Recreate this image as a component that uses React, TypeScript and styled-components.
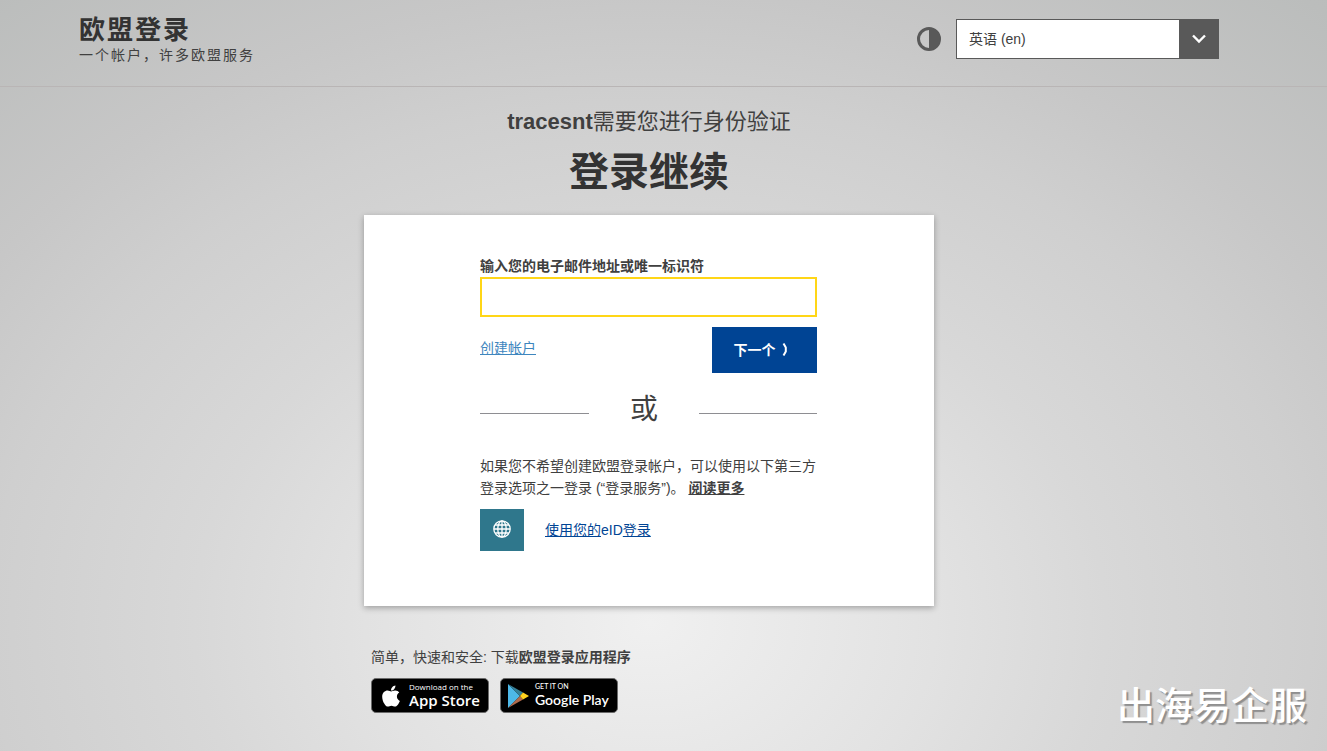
import React from "react";
import styled, { createGlobalStyle } from "styled-components";
import { FaApple } from "react-icons/fa";

const GlobalStyle = createGlobalStyle`
  *, *::before, *::after { box-sizing: border-box; }
  body {
    margin: 0;
    color: #404040;
    font-family: "Liberation Sans", "Noto Sans CJK SC", sans-serif;
    font-size: 14px;
    line-height: 22px;
  }
  h1, h2, p { margin: 0; }
`;

const Page = styled.div`
  position: relative;
  min-height: 100vh;
  background: radial-gradient(ellipse 1140px 900px at 49% 83%, #f0f0f0 0%, #e2e2e2 25%, #d8d8d8 40%, #cfcfcf 58%, #c7c7c7 70%, #bbbdbc 90%, #b8baba 100%);
`;

const Header = styled.header`
  padding-right: 29px;
  border-bottom: 1px solid #b9b5b5;
`;

const HeaderInner = styled.div`
  display: flex;
  justify-content: space-between;
  align-items: flex-start;
  max-width: 1140px;
  min-height: 86px;
  margin: 0 auto;
  padding: 14px 0;
`;

const Brand = styled.div`
  color: #404040;
  letter-spacing: 2px;
`;

const BrandName = styled.div`
  color: #333;
  font-size: 26px;
  font-weight: 700;
  line-height: 32px;
`;

const BrandTagline = styled.div`
  line-height: 18px;
`;

const Tools = styled.div`
  display: flex;
  align-items: center;
  gap: 15px;
  padding-top: 5px;
`;

const ContrastButton = styled.button`
  display: flex;
  padding: 0;
  border: 0;
  background: none;
  cursor: pointer;
`;

const SelectBox = styled.div`
  position: relative;
  width: 263px;
`;

const LanguageSelect = styled.select`
  display: block;
  width: 100%;
  height: 40px;
  padding: 0 52px 0 12px;
  border: 1px solid #595959;
  border-radius: 0;
  background: #fff;
  color: #404040;
  font: inherit;
  appearance: none;
`;

const SelectArrow = styled.span`
  position: absolute;
  top: 0;
  right: 0;
  display: flex;
  align-items: center;
  justify-content: center;
  width: 40px;
  height: 100%;
  background: #595959;
  pointer-events: none;
`;

const Main = styled.main`
  padding: 19px 29px 36px 0;
`;

const Headings = styled.div`
  text-align: center;
`;

const Service = styled.h2`
  font-size: 22px;
  font-weight: 400;
  line-height: 32px;
`;

const Title = styled.h1`
  color: #333;
  font-size: 40px;
  font-weight: 700;
  line-height: 68px;
`;

const Column = styled.div`
  width: 100%;
  max-width: 570px;
  margin: 0 auto;
`;

const Card = styled.section`
  margin-top: 9px;
  padding: 40px 117px 55px 116px;
  background: #fff;
  box-shadow: 0 2px 6px rgba(0, 0, 0, 0.3);
`;

const Label = styled.label`
  display: block;
  color: #404040;
  font-weight: 700;
`;

const TextInput = styled.input`
  display: block;
  width: 100%;
  height: 40px;
  padding: 0 10px;
  border: 2px solid #ffd617;
  outline: none;
  font: inherit;
`;

const Actions = styled.div`
  display: flex;
  justify-content: space-between;
  align-items: flex-start;
  margin-top: 10px;
`;

const CreateLink = styled.a`
  padding-top: 10px;
  color: #3e86be;
`;

const NextButton = styled.button`
  display: flex;
  align-items: center;
  justify-content: center;
  gap: 6px;
  width: 105px;
  height: 46px;
  padding: 0 8px 0 0;
  border: 0;
  background: #004494;
  color: #fff;
  font: inherit;
  font-weight: 700;
  cursor: pointer;
`;

const Divider = styled.div`
  display: flex;
  align-items: center;
  height: 80px;
  margin-bottom: 2px;
  font-size: 28px;
  line-height: 40px;
`;

const Rule = styled.span<{ $grow: number }>`
  flex: ${(p) => p.$grow} 1 0;
  height: 1px;
  background: #8e8e92;
`;

const DividerText = styled.span`
  padding: 0 41px 6px;
`;

const MoreLink = styled.a`
  color: #404040;
  font-weight: 700;
`;

const EidLink = styled.a`
  display: flex;
  align-items: center;
  gap: 21px;
  margin-top: 10px;
  color: #004494;
  text-decoration: none;
`;

const EidIcon = styled.span`
  display: flex;
  align-items: center;
  justify-content: center;
  width: 44px;
  height: 42px;
  padding-bottom: 2px;
  background: #2f778c;
`;

const Underlined = styled.span`
  text-decoration: underline;
`;

const Apps = styled.section`
  margin-top: 40px;
  padding-left: 7px;
`;

const Badges = styled.div`
  display: flex;
  gap: 11px;
  margin-top: 10px;
`;

const Badge = styled.a`
  display: flex;
  align-items: center;
  gap: 6px;
  width: 118px;
  height: 35px;
  padding-left: 7px;
  border: 1px solid #6b6b6b;
  border-radius: 5px;
  background: #000;
  color: #fff;
  text-decoration: none;
  white-space: nowrap;

  svg {
    flex-shrink: 0;
  }
`;

const BadgeText = styled.span`
  display: flex;
  flex-direction: column;
`;

const BadgeSmall = styled.span<{ $family: string; $size: number }>`
  font-family: ${(p) => p.$family}, sans-serif;
  font-size: ${(p) => p.$size}px;
  font-weight: 500;
  line-height: 9px;
`;

const BadgeName = styled.span<{ $family: string; $size: number }>`
  font-family: ${(p) => p.$family}, sans-serif;
  font-size: ${(p) => p.$size}px;
  font-weight: 600;
  line-height: 18px;
`;

const Watermark = styled.div`
  position: absolute;
  right: 20px;
  bottom: 17px;
  color: #fff;
  font-size: 38px;
  font-weight: 500;
  line-height: 56px;
  text-shadow: 2px 2px 1px #8f8f8f;
`;

export default function App() {
  return (
    <Page>
      <GlobalStyle />
      <Header>
        <HeaderInner>
          <Brand>
            <BrandName>欧盟登录</BrandName>
            <BrandTagline>一个帐户，许多欧盟服务</BrandTagline>
          </Brand>
          <Tools>
            <ContrastButton type="button" aria-label="对比度">
              <svg width="24" height="24" viewBox="0 0 24 24">
                <circle cx="12" cy="12" r="10.5" fill="none" stroke="#595959" strokeWidth="3" />
                <path d="M12 1a11 11 0 0 1 0 22z" fill="#595959" />
              </svg>
            </ContrastButton>
            <SelectBox>
              <LanguageSelect aria-label="语言" defaultValue="en">
                <option value="en">英语 (en)</option>
              </LanguageSelect>
              <SelectArrow>
                <svg width="14" height="10" viewBox="0 0 14 10">
                  <path d="M1 1.5l6 6 6-6" fill="none" stroke="#fff" strokeWidth="2.4" />
                </svg>
              </SelectArrow>
            </SelectBox>
          </Tools>
        </HeaderInner>
      </Header>
      <Main>
        <Headings>
          <Service>
            <strong>tracesnt</strong>需要您进行身份验证
          </Service>
          <Title>登录继续</Title>
        </Headings>
        <Column>
          <Card>
            <form onSubmit={(e) => e.preventDefault()}>
              <Label htmlFor="username">输入您的电子邮件地址或唯一标识符</Label>
              <TextInput id="username" type="text" />
              <Actions>
                <CreateLink href="#create">创建帐户</CreateLink>
                <NextButton type="submit">
                  下一个
                  <svg width="6" height="14" viewBox="0 0 6 14">
                    <path d="M1.500 0.500L3.800 4.500V8.500L1.500 12.500" fill="none" stroke="#fff" strokeWidth="2" />
                  </svg>
                </NextButton>
              </Actions>
            </form>
            <Divider>
              <Rule $grow={12} />
              <DividerText>或</DividerText>
              <Rule $grow={13} />
            </Divider>
            <p>
              如果您不希望创建欧盟登录帐户，可以使用以下第三方登录选项之一登录 (“登录服务”)。{" "}
              <MoreLink href="#more">阅读更多</MoreLink>
            </p>
            <EidLink href="#eid">
              <EidIcon>
                <svg width="18" height="18" viewBox="0 0 18 18" fill="none" stroke="#fff" strokeWidth="1.3">
                  <circle cx="9" cy="9" r="8.200" />
                  <ellipse cx="9" cy="9" rx="4.200" ry="8.200" />
                  <path d="M9 1v16M1 9h16M2.200 5h13.600M2.200 13h13.600" />
                </svg>
              </EidIcon>
              <span>
                <Underlined>使用您的</Underlined>eID<Underlined>登录</Underlined>
              </span>
            </EidLink>
          </Card>
          <Apps>
            <p>
              简单，快速和安全: 下载<strong>欧盟登录应用程序</strong>
            </p>
            <Badges>
              <Badge href="#app-store">
                <FaApple size={24} />
                <BadgeText>
                  <BadgeSmall $family='"Open Sans"' $size={8}>Download on the</BadgeSmall>
                  <BadgeName $family='"Open Sans"' $size={15}>App Store</BadgeName>
                </BadgeText>
              </Badge>
              <Badge href="#google-play">
                <svg width="21" height="24" viewBox="0 0 21 24">
                  <path d="M0 0v24l12-12z" fill="#4db8e8" />
                  <path d="M0 0l12 12 3-3.500z" fill="#357f96" />
                  <path d="M0 24l12-12 3 3.500z" fill="#b06a4c" />
                  <path d="M15 8.500l6 3.500-6 3.500-3-3.500z" fill="#ffd21f" />
                </svg>
                <BadgeText>
                  <BadgeSmall $family="Lato" $size={7}>GET IT ON</BadgeSmall>
                  <BadgeName $family="Lato" $size={14}>Google Play</BadgeName>
                </BadgeText>
              </Badge>
            </Badges>
          </Apps>
        </Column>
      </Main>
      <Watermark>出海易企服</Watermark>
    </Page>
  );
}
